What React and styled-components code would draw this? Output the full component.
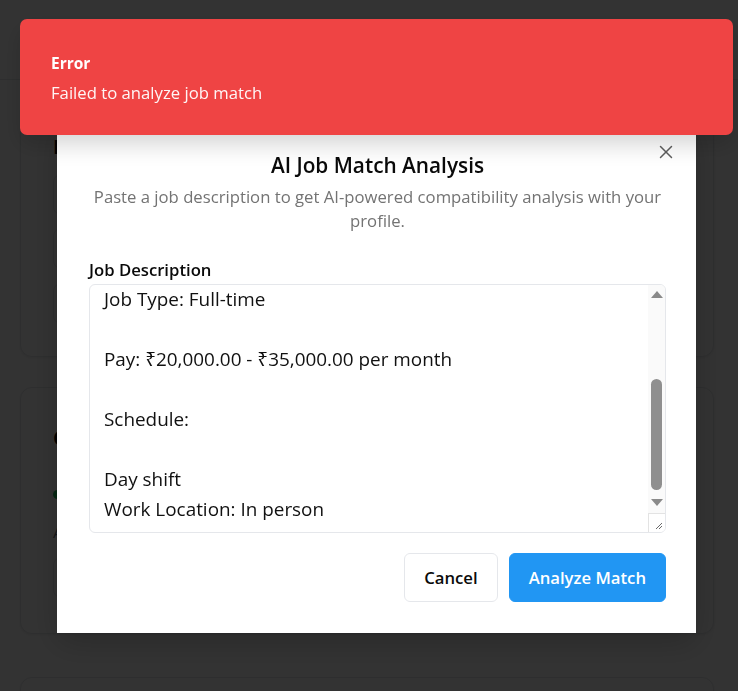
import { useLayoutEffect, useRef } from 'react'
import styled, { createGlobalStyle } from 'styled-components'
import { X } from 'lucide-react'

const GlobalStyle = createGlobalStyle`
  html, body {
    margin: 0;
    padding: 0;
    background: #ffffff;
    font-family: "Open Sans", "Noto Sans", sans-serif;
    color: #0a0a0a;
  }
  * {
    box-sizing: border-box;
  }
`

const Page = styled.div`
  height: 691px;
  overflow: hidden;
`

const Header = styled.header`
  height: 80px;
  border-bottom: 1px solid #e5e7eb;
`

const Main = styled.main`
  display: flex;
  flex-direction: column;
  padding: 20px 24px 0 20px;
`

const Card = styled.section`
  display: flex;
  flex-direction: column;
  min-height: ${(p) => p.$minHeight ?? 0}px;
  padding: 32px 32px ${(p) => p.$padBottom ?? 32}px;
  margin-bottom: ${(p) => p.$gap ?? 30}px;
  border: 1px solid #e5e7eb;
  border-radius: 12px;
  background: #ffffff;
  box-shadow: 0 1px 3px rgba(0, 0, 0, 0.08);
`

const CardTitle = styled.h2`
  margin: 0 0 ${(p) => p.$after ?? 13}px;
  font-size: 20px;
  font-weight: 700;
  line-height: ${(p) => p.$lh ?? 28}px;
  color: #0a0a0a;
`

const FieldBox = styled.div`
  height: 41px;
  margin-bottom: ${(p) => p.$after ?? 0}px;
  border: 1px solid #e5e7eb;
  border-radius: 8px;
`

const StatusRow = styled.div`
  display: flex;
  align-items: center;
  gap: 8px;
  margin-top: 28px;
  font-size: 15px;
  line-height: 20px;
`

const Dot = styled.span`
  width: 9px;
  height: 9px;
  border-radius: 50%;
  background: #22c55e;
`

const Muted = styled.p`
  margin: 18px 0 15px;
  font-size: 15px;
  line-height: 20px;
  color: #6b7280;
`

const Overlay = styled.div`
  position: fixed;
  inset: 0;
  background: rgba(0, 0, 0, 0.8);
`

const Dialog = styled.div`
  position: fixed;
  left: 57px;
  top: 119px;
  width: 639px;
  display: flex;
  flex-direction: column;
  padding: 32px 30px 31px 32px;
  background: #ffffff;
  box-shadow: 0 10px 30px rgba(0, 0, 0, 0.2);
`

const CloseButton = styled.button`
  position: absolute;
  top: 22px;
  right: 19px;
  display: flex;
  padding: 0;
  border: none;
  background: none;
  color: #5f5f5f;
  cursor: pointer;
`

const Title = styled.h2`
  margin: 0;
  text-align: center;
  font-size: 20.8px;
  font-weight: 600;
  line-height: 28px;
  color: #0a0a0a;
`

const Description = styled.p`
  margin: 6px 0 0;
  text-align: center;
  font-size: 16.7px;
  line-height: 24px;
  color: #737373;
`

const Label = styled.label`
  margin-top: 27px;
  font-size: 16.7px;
  font-weight: 600;
  line-height: 20px;
`

const TextBox = styled.div`
  display: flex;
  height: 249px;
  margin-top: 4px;
  border: 1px solid #e5e7eb;
  border-radius: 6px;
  overflow: hidden;
`

const TextArea = styled.textarea`
  flex: 1;
  padding: 0 0 8px 14px;
  border: none;
  outline: none;
  resize: none;
  overflow: hidden;
  background: transparent;
  font-family: "Open Sans", "Noto Sans", sans-serif;
  font-size: 18.9px;
  line-height: 30px;
  color: #111111;
`

const ScrollBar = styled.div`
  display: flex;
  flex-direction: column;
  width: 17px;
  background: #fafafa;
`

const ArrowButton = styled.div`
  display: flex;
  justify-content: center;
  align-items: flex-start;
  height: ${(p) => p.$height}px;
  padding-top: ${(p) => p.$pad}px;

  &::before {
    content: '';
    border-left: 6px solid transparent;
    border-right: 6px solid transparent;
    ${(p) =>
      p.$up ? 'border-bottom: 7px solid #8a8a8a;' : 'border-top: 7px solid #8a8a8a;'}
  }
`

const Track = styled.div`
  flex: 1;
  display: flex;
  flex-direction: column;
  justify-content: flex-end;
  align-items: center;
  padding-bottom: 5px;
`

const Thumb = styled.div`
  width: 11px;
  height: 111px;
  border-radius: 6px;
  background: #8f8f8f;
`

const Corner = styled.div`
  display: flex;
  justify-content: flex-end;
  align-items: flex-end;
  height: 19px;
  padding: 0 2px 2px 0;
  border-top: 1px solid #e3e3e3;
  border-left: 1px solid #e3e3e3;
  background: #ffffff;
`

const Actions = styled.div`
  display: flex;
  justify-content: flex-end;
  gap: 11px;
  margin-top: 20px;
`

const Button = styled.button`
  height: 49px;
  padding: 0 19px;
  border: 1px solid ${(p) => (p.$primary ? '#2196f3' : '#e5e7eb')};
  border-radius: 6px;
  background: ${(p) => (p.$primary ? '#2196f3' : '#ffffff')};
  color: ${(p) => (p.$primary ? '#ffffff' : '#0a0a0a')};
  font-family: "Open Sans", "Noto Sans", sans-serif;
  font-size: 16.7px;
  font-weight: 600;
  cursor: pointer;
`

const Toast = styled.div`
  position: fixed;
  left: 20px;
  top: 19px;
  width: 713px;
  height: 116px;
  display: flex;
  flex-direction: column;
  gap: 10px;
  padding: 34px 31px;
  border-radius: 7px;
  background: #ef4444;
  color: #ffffff;
  box-shadow: 0 10px 22px rgba(0, 0, 0, 0.16);
`

const ToastTitle = styled.div`
  font-size: 15.5px;
  font-weight: 700;
  line-height: 20px;
`

const ToastText = styled.div`
  font-size: 16.7px;
  line-height: 20px;
  opacity: 0.95;
`

const jobText = [
  'Job Title: Junior Web Developer',
  '',
  'Experience: 0 - 2 years',
  '',
  'Skills: React, JavaScript, HTML, CSS',
  '',
  'Job Type: Full-time',
  '',
  'Pay: ₹20,000.00 - ₹35,000.00 per month',
  '',
  'Schedule:',
  '',
  'Day shift',
  'Work Location: In person',
].join('\n')

function App() {
  const areaRef = useRef(null)

  useLayoutEffect(() => {
    const el = areaRef.current
    if (el) el.scrollTop = el.scrollHeight
  }, [])

  return (
    <>
      <GlobalStyle />
      <Page>
        <Header />
        <Main>
          <Card>
            <CardTitle>Profile Details</CardTitle>
            <FieldBox $after={13} />
            <FieldBox $after={14} />
            <FieldBox />
          </Card>
          <Card $padBottom={35} $gap={43}>
            <CardTitle $lh={36} $after={0}>
              Current Status
            </CardTitle>
            <StatusRow>
              <Dot />
              Open to opportunities
            </StatusRow>
            <Muted>Availability</Muted>
            <FieldBox />
          </Card>
          <Card $minHeight={120} />
        </Main>
      </Page>

      <Overlay />

      <Dialog role="dialog">
        <Title>AI Job Match Analysis</Title>
        <Description>
          Paste a job description to get AI-powered compatibility analysis with your profile.
        </Description>
        <Label htmlFor="job-description">Job Description</Label>
        <TextBox>
          <TextArea
            id="job-description"
            ref={areaRef}
            defaultValue={jobText}
            spellCheck={false}
          />
          <ScrollBar>
            <ArrowButton $up $height={16} $pad={6} />
            <Track>
              <Thumb />
            </Track>
            <ArrowButton $height={18} $pad={4} />
            <Corner>
              <svg width="8" height="8" viewBox="0 0 8 8">
                <path d="M7 1 L1 7 M7 4 L4 7" stroke="#6b6b6b" strokeWidth="1" fill="none" />
              </svg>
            </Corner>
          </ScrollBar>
        </TextBox>
        <Actions>
          <Button>Cancel</Button>
          <Button $primary>Analyze Match</Button>
        </Actions>
        <CloseButton aria-label="Close">
          <X size={22} strokeWidth={1.6} />
        </CloseButton>
      </Dialog>

      <Toast>
        <ToastTitle>Error</ToastTitle>
        <ToastText>Failed to analyze job match</ToastText>
      </Toast>
    </>
  )
}

export default App
